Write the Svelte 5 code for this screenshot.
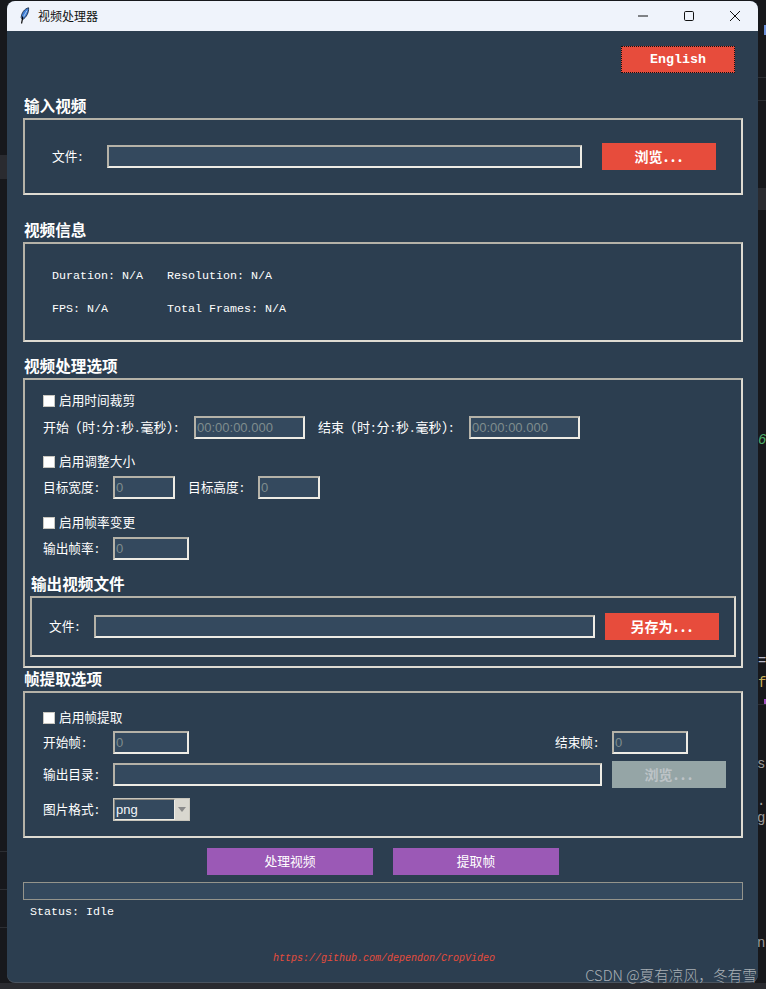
<script>
  const backdropMarks = [
    { cls: 'm-g', top: 432, left: 758, text: '6' },
    { cls: 'm-w', top: 653, left: 758, text: '=' },
    { cls: 'm-y', top: 675, left: 758, text: 'f' },
    { cls: 'm-d', top: 756, left: 757, text: 's' },
    { cls: 'm-d', top: 793, left: 757, text: '.' },
    { cls: 'm-d', top: 810, left: 757, text: 'g' },
    { cls: 'm-d', top: 935, left: 757, text: 'n' }
  ];
</script>

<div class="desk">
  <div class="band band-l"></div>
  <div class="band band-r"></div>
  <div class="band band-b"></div>
  <div class="line" style="left:0;top:851px;width:7px"></div>
  <div class="line" style="left:0;top:889px;width:7px"></div>
  <div class="line" style="left:0;top:927px;width:7px"></div>
  <div class="line" style="left:758px;top:77px;width:8px"></div>
  <div class="line" style="left:758px;top:100px;width:8px"></div>
  <div class="line" style="left:758px;top:704px;width:8px"></div>
  <div class="chip chip-a"></div>
  <div class="chip chip-b"></div>
  {#each backdropMarks as m}
    <span class="mark {m.cls}" style="left:{m.left}px;top:{m.top}px">{m.text}</span>
  {/each}

  <div class="window">
    <header class="titlebar">
      <svg class="feather" width="11" height="18" viewBox="0 0 11 18" aria-hidden="true">
        <path d="M8.6.8C4.6 1.6 1.3 6 1.2 10.6l1.4 2C6.4 10.4 9 5.4 8.6.8z" fill="#3f7fd6" stroke="#1c2a44" stroke-width=".9"/>
        <path d="M7 3.6 3.2 10.4" stroke="#c9dcf5" stroke-width=".8" fill="none"/>
        <path d="M2.8 9.5 1.6 16.5" stroke="#000" stroke-width="1.2" fill="none"/>
      </svg>
      <span class="wintitle">视频处理器</span>
      <div class="wincontrols">
        <svg width="12" height="12" viewBox="0 0 12 12" aria-hidden="true"><path d="M1 6h10" stroke="#111" stroke-width="1" fill="none"/></svg>
        <svg width="12" height="12" viewBox="0 0 12 12" aria-hidden="true"><rect x="1.5" y="1.5" width="9" height="9" rx="1.2" stroke="#111" stroke-width="1" fill="none"/></svg>
        <svg width="12" height="12" viewBox="0 0 12 12" aria-hidden="true"><path d="M1 1l10 10M11 1 1 11" stroke="#111" stroke-width="1" fill="none"/></svg>
      </div>
    </header>

    <main class="content">
      <div class="langrow"><button class="btn red lang">English</button></div>

      <h2 class="title t1">输入视频</h2>
      <section class="frame f1">
        <span class="lb l-file">文件:</span>
        <input class="inp grow1" />
        <button class="btn red browse">浏览...</button>
      </section>

      <h2 class="title t2">视频信息</h2>
      <section class="frame f2">
        <div class="info"><span>Duration: N/A</span><span>Resolution: N/A</span></div>
        <div class="info"><span>FPS: N/A</span><span>Total Frames: N/A</span></div>
      </section>

      <h2 class="title t3">视频处理选项</h2>
      <section class="frame f3">
        <div class="group">
          <label class="check c1"><input type="checkbox" /><span class="lb">启用时间裁剪</span></label>
          <div class="row r1">
            <span class="lb w-time">开始 (时:分:秒.毫秒):</span>
            <input class="inp time" value="00:00:00.000" />
            <span class="lb w-time w-time2">结束 (时:分:秒.毫秒):</span>
            <input class="inp time" value="00:00:00.000" />
          </div>
          <label class="check c2"><input type="checkbox" /><span class="lb">启用调整大小</span></label>
          <div class="row r2">
            <span class="lb w-lab">目标宽度:</span>
            <input class="inp small" value="0" />
            <span class="lb w-lab2">目标高度:</span>
            <input class="inp small" value="0" />
          </div>
          <label class="check c2b"><input type="checkbox" /><span class="lb">启用帧率变更</span></label>
          <div class="row r2">
            <span class="lb w-lab">输出帧率:</span>
            <input class="inp mid" value="0" />
          </div>
        </div>

        <h2 class="title t3b">输出视频文件</h2>
        <section class="frame sub">
          <span class="lb l-file2">文件:</span>
          <input class="inp grow2" />
          <button class="btn red saveas">另存为...</button>
        </section>
      </section>

      <h2 class="title t4">帧提取选项</h2>
      <section class="frame f4">
        <label class="check c3"><input type="checkbox" /><span class="lb">启用帧提取</span></label>
        <div class="row r3">
          <span class="lb w-lab">开始帧:</span>
          <input class="inp mid" value="0" />
          <span class="lb w-end">结束帧:</span>
          <input class="inp mid" value="0" />
        </div>
        <div class="row r4">
          <span class="lb w-lab">输出目录:</span>
          <input class="inp dir" />
          <button class="btn off browse2">浏览...</button>
        </div>
        <div class="row r5">
          <span class="lb w-lab">图片格式:</span>
          <div class="combo">
            <span class="combo-val">png</span>
            <span class="combo-arrow"><i></i></span>
          </div>
        </div>
      </section>

      <div class="actions">
        <button class="btn purple">处理视频</button>
        <button class="btn purple">提取帧</button>
      </div>

      <div class="progress"></div>
      <div class="status">Status: Idle</div>
      <div class="link">https://github.com/dependon/CropVideo</div>
    </main>
  </div>

  <div class="watermark">CSDN @夏有凉风，冬有雪</div>
</div>

<style>
  :global(body) {
    margin: 0;
    background: #17181c;
  }
  .desk {
    position: relative;
    width: 766px;
    height: 989px;
    overflow: hidden;
    background: #17181c;
    box-sizing: border-box;
  }
  .band {
    position: absolute;
    background: #2a2b30;
  }
  .band-l { left: 0; top: 155px; width: 7px; height: 24px; }
  .band-r { left: 758px; top: 188px; width: 8px; height: 22px; }
  .band-b { left: 0; top: 983px; width: 766px; height: 6px; }
  .line {
    position: absolute;
    height: 1px;
    background: #2c2e33;
  }
  .chip {
    position: absolute;
    left: 764px;
    width: 2px;
  }
  .chip-a { top: 25px; height: 10px; background: #6a8fd8; }
  .chip-b { top: 699px; height: 5px; background: #a04fc0; }
  .mark {
    position: absolute;
    font: 14px/16px "Liberation Mono", monospace;
    color: #9a9a9a;
  }
  .m-g { color: #4fb06b; font-style: italic; }
  .m-w { color: #b8b8c8; }
  .m-y { color: #c8b05a; }
  .window {
    position: absolute;
    left: 7px;
    top: 1px;
    width: 751px;
    height: 981px;
    background: #2c3e50;
    border-radius: 8px;
    overflow: hidden;
    box-shadow: 0 1px 0 #4a5460;
  }
  .titlebar {
    display: flex;
    align-items: center;
    height: 30px;
    background: #eff3fb;
    padding-left: 13px;
    box-sizing: border-box;
  }
  .feather { margin-right: 7px; }
  .wintitle {
    font: 12px/16px "Noto Sans CJK SC", sans-serif;
    color: #111;
  }
  .wincontrols {
    display: flex;
    margin-left: auto;
    gap: 34px;
    padding-right: 17px;
  }
  .content {
    display: flex;
    flex-direction: column;
    padding: 15px 15px 0 16px;
  }
  .langrow {
    display: flex;
    justify-content: flex-end;
    padding-right: 8px;
  }
  .btn {
    display: block;
    margin: 0;
    padding: 0;
    border: 0;
    border-radius: 0;
    color: #fff;
    font: 700 14px/27px "Noto Sans Mono CJK SC", "Liberation Mono", "Noto Sans CJK SC", monospace;
    width: 114px;
    height: 27px;
    flex: none;
  }
  .red { background: #e74c3c; }
  .off { background: #95a5a6; color: #bdc3c7; }
  .purple {
    background: #9b59b6;
    width: 166px;
    font-weight: 400;
    font-size: 12.8px;
    line-height: 25px;
    padding-bottom: 2px;
  }
  .lang {
    font-family: "Liberation Mono", monospace;
    font-size: 13.3px;
    outline: 1px dotted #111;
    outline-offset: -1px;
  }
  .title {
    margin: 0;
    height: 22px;
    font: 700 15.6px/18px "Noto Sans CJK SC", sans-serif;
    color: #fff;
    padding-left: 1px;
  }
  .t1 { margin-top: 23px; }
  .t2 { margin-top: 25px; }
  .t3 { margin-top: 14px; }
  .t4 { margin-top: 1px; }
  .t3b { margin: 13px 0 0 1px; padding: 1px 0 0; }
  .frame {
    box-sizing: border-box;
    border: 2px solid;
    border-color: #b5b2a8 #dedbd2 #dedbd2 #b5b2a8;
  }
  .lb {
    font: 12.7px/18px "Noto Sans Mono CJK SC", "Noto Sans CJK SC", sans-serif;
    color: #fff;
    white-space: pre;
    flex: none;
    margin-bottom: 2px;
  }
  .inp {
    display: block;
    box-sizing: border-box;
    height: 23px;
    margin: 0;
    padding: 0 1px;
    background: #34495e;
    border: 2px solid;
    border-color: #b5b2a8 #eeece5 #eeece5 #b5b2a8;
    border-radius: 0;
    outline: 0;
    font: 13px/19px "Liberation Sans", sans-serif;
    color: #7f8c8d;
    flex: none;
  }
  .f1 {
    display: flex;
    align-items: center;
    height: 77px;
    padding-left: 27px;
  }
  .l-file { width: 55px; }
  .grow1 { width: 475px; margin-right: 20px; }
  .f2 {
    height: 100px;
    padding: 16px 0 0 27px;
  }
  .info {
    display: grid;
    grid-template-columns: 115px auto;
    height: 33px;
    font: 11.67px/33px "Liberation Mono", monospace;
    color: #fff;
    white-space: pre;
  }
  .f3 {
    height: 290px;
    padding: 15px 5px 0;
  }
  .group { padding-left: 13px; }
  .check {
    display: flex;
    align-items: flex-start;
    height: 13px;
  }
  .check input {
    appearance: none;
    box-sizing: border-box;
    width: 12px;
    height: 12px;
    margin: 0 4px 0 0;
    background: #fff;
    border: 1px solid #c9c7c0;
    border-radius: 0;
    flex: none;
  }
  .check .lb {
    margin: -4px 0 0;
  }
  .c2 { margin-top: 17px; }
  .c2b { margin-top: 18px; }
  .row {
    display: flex;
    align-items: center;
    height: 23px;
  }
  .r1 { margin-top: 8px; }
  .r2 { margin-top: 7px; }
  .w-time { width: 151px; font-size: 13px; }
  .w-time2 { margin-left: 13px; }
  .time { width: 111px; }
  .w-lab { width: 70px; }
  .w-lab2 { width: 70px; margin-left: 13px; }
  .small { width: 62px; }
  .mid { width: 76px; }
  .sub {
    display: flex;
    align-items: center;
    height: 61px;
    padding-left: 17px;
  }
  .l-file2 { width: 45px; }
  .grow2 { width: 501px; margin-right: 10px; }
  .f4 {
    height: 147px;
    padding: 19px 0 0 18px;
  }
  .r3 { margin-top: 6px; }
  .r4 { margin-top: 9px; }
  .r5 { margin-top: 12px; }
  .w-end { width: 57px; margin-left: 366px; }
  .dir { width: 489px; margin-right: 10px; }
  .combo {
    display: flex;
    width: 77px;
    height: 23px;
    box-sizing: border-box;
    border: 1px solid #c9c6bc;
  }
  .combo-val {
    flex: 1;
    box-sizing: border-box;
    background: #34495e;
    border-right: 1px solid #eeece5;
    border-bottom: 1px solid #eeece5;
    border-top: 1px solid #8f8c84;
    border-left: 1px solid #8f8c84;
    font: 13px/19px "Liberation Sans", sans-serif;
    color: #f2f5fa;
    padding-left: 1px;
  }
  .combo-arrow {
    display: flex;
    align-items: center;
    justify-content: center;
    width: 14px;
    background: #d9d7cf;
  }
  .combo-arrow i {
    width: 0;
    height: 0;
    border-left: 4.5px solid transparent;
    border-right: 4.5px solid transparent;
    border-top: 5px solid #8a8a8a;
  }
  .actions {
    display: flex;
    justify-content: center;
    gap: 20px;
    margin-top: 10px;
  }
  .progress {
    box-sizing: border-box;
    height: 18px;
    margin-top: 7px;
    background: #34495e;
    border: 1px solid #94948c;
  }
  .status {
    margin: 4px 0 0 7px;
    font: 11.67px/16px "Liberation Mono", monospace;
    color: #fff;
  }
  .link {
    margin: 32px 0 0 250px;
    font: italic 10px/14px "Liberation Mono", monospace;
    color: #e74c3c;
  }
  .watermark {
    position: absolute;
    right: 9px;
    top: 964px;
    font: 300 14.7px/22px "Noto Sans CJK SC", sans-serif;
    color: #a9afb5;
    white-space: nowrap;
  }
</style>
